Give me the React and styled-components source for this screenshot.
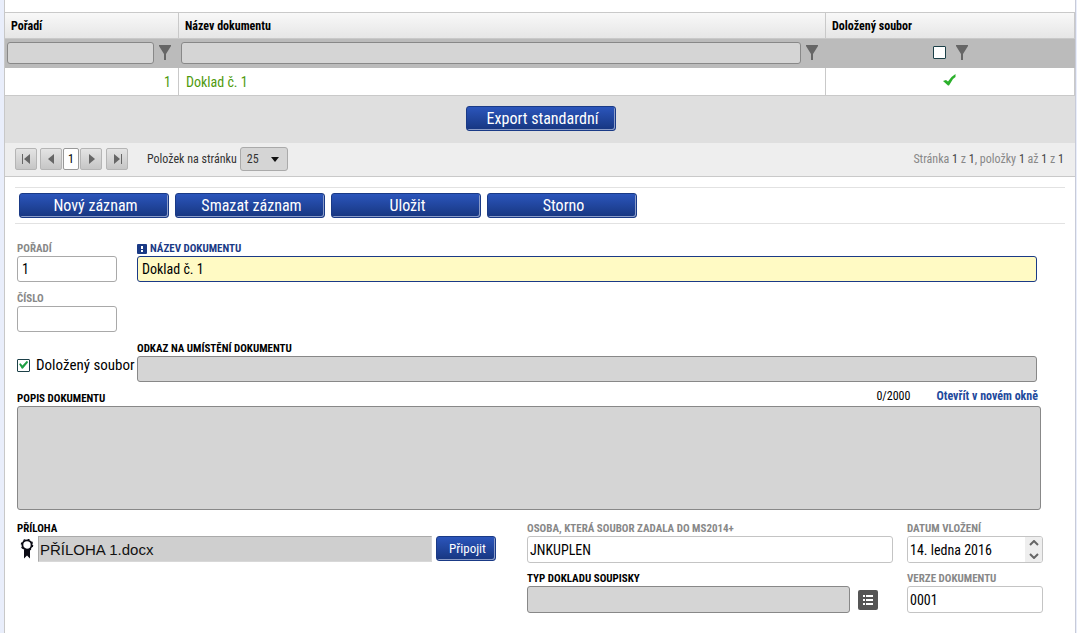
import React, { useState } from 'react';
import styled, { createGlobalStyle } from 'styled-components';

const GlobalStyle = createGlobalStyle`
    * {
        box-sizing: border-box;
    }

    body {
        margin: 0;
        background: #e9eefb;
    }

    body, input, textarea, select, button {
        font-family: 'Roboto Condensed', 'Liberation Sans Narrow', Roboto, sans-serif;
    }
`;

const FunnelIcon = () => (
    <svg width="12" height="15" viewBox="0 0 12 15" aria-hidden="true">
        <path d="M0 0h12v1L7 9v6H5V9L0 1z" fill="#666" />
    </svg>
);

const CheckIcon = () => (
    <svg width="14" height="14" viewBox="0 0 14 14" aria-hidden="true">
        <path d="M0 8 3 7l2 1.500L8.500 4 12.500 1v3L10 6 6 12.500H5z" fill="#2bb02b" />
    </svg>
);

const RibbonIcon = () => (
    <svg width="14" height="20" viewBox="0 0 14 20" aria-hidden="true">
        <path d="M4 11h6v8.500L7 16.500 4 19.500z" fill="#0b0b14" />
        <circle cx="7" cy="6" r="4.600" fill="#fff" stroke="#0b0b14" strokeWidth="1.800" />
        <circle cx="7" cy="6" r="5.600" fill="none" stroke="#0b0b14" strokeWidth="1.300" strokeDasharray="2 2.400" />
    </svg>
);

const ListIcon = () => (
    <svg width="12" height="12" viewBox="0 0 12 12" aria-hidden="true">
        <path d="M1 1h2v2H1zM4 1h7v2H4zM1 5h2v2H1zM4 5h7v2H4zM1 9h2v2H1zM4 9h7v2H4z" fill="#fff" />
    </svg>
);

const RequiredIcon = () => (
    <svg width="10" height="10" viewBox="0 0 10 10" aria-hidden="true">
        <rect width="10" height="10" rx="1" fill="#1a3a86" />
        <path d="M4 2h2v3H4zM4 6h2v2H4z" fill="#fff" />
    </svg>
);

const arrows = {
    first: 'M1 1h1v10H1zM9 1v10L3 6z',
    prev: 'M8 1v10L2 6z',
    next: 'M3 1v10l6-5z',
    last: 'M2 1v10l6-5zM9 1h1v10H9z',
};

const PagerArrow = ({ type, label }) => (
    <PagerButton type="button" aria-label={label}>
        <svg width="11" height="12" viewBox="0 0 11 12" aria-hidden="true">
            <path d={arrows[type]} fill="#666" />
        </svg>
    </PagerButton>
);

const toolbar = ['Nový záznam', 'Smazat záznam', 'Uložit', 'Storno'];

const App = () => {
    const [attached, setAttached] = useState(true);
    const [filter, setFilter] = useState(false);

    return (
        <Panel>
            <GlobalStyle />

            {/* seznam dokumentů */}
            <Table>
                <colgroup>
                    <col width="174" />
                    <col />
                    <col width="249" />
                </colgroup>
                <thead>
                    <tr>
                        <HeadCell scope="col">Pořadí</HeadCell>
                        <HeadCell scope="col">Název dokumentu</HeadCell>
                        <HeadCell scope="col">Doložený soubor</HeadCell>
                    </tr>
                </thead>
                <tbody>
                    <tr>
                        <FilterCell>
                            <FilterBox>
                                <FilterInput aria-label="Filtr pořadí" />
                                <FunnelIcon />
                            </FilterBox>
                        </FilterCell>
                        <FilterCell>
                            <FilterBox>
                                <FilterInput aria-label="Filtr názvu dokumentu" />
                                <FunnelIcon />
                            </FilterBox>
                        </FilterCell>
                        <FilterCell>
                            <FilterBox $center>
                                <Checkbox
                                    aria-label="Filtr doloženého souboru"
                                    checked={filter}
                                    onChange={(e) => setFilter(e.target.checked)}
                                />
                                <FunnelIcon />
                            </FilterBox>
                        </FilterCell>
                    </tr>
                    <tr>
                        <Cell $align="right">1</Cell>
                        <Cell>Doklad č. 1</Cell>
                        <Cell $align="center"><CheckIcon /></Cell>
                    </tr>
                </tbody>
            </Table>

            <ExportBar>
                <Button type="button">Export standardní</Button>
            </ExportBar>

            <Pager>
                <PagerArrow type="first" label="První stránka" />
                <PagerGroup>
                    <PagerArrow type="prev" label="Předchozí stránka" />
                    <CurrentPage type="button">1</CurrentPage>
                    <PagerArrow type="next" label="Další stránka" />
                </PagerGroup>
                <PagerArrow type="last" label="Poslední stránka" />
                <PageSizeLabel htmlFor="pageSize">Položek na stránku</PageSizeLabel>
                <SelectWrapper>
                    <Select id="pageSize" defaultValue="25">
                        <option>10</option>
                        <option>25</option>
                        <option>50</option>
                    </Select>
                </SelectWrapper>
                <PagerInfo>
                    Stránka <b>1</b> z <b>1</b>, položky <b>1</b> až <b>1</b> z <b>1</b>
                </PagerInfo>
            </Pager>

            <Toolbar>
                {toolbar.map((text) => (
                    <Button key={text} type="button">{text}</Button>
                ))}
            </Toolbar>

            {/* detail dokumentu */}
            <Form onSubmit={(e) => e.preventDefault()}>
                <Row>
                    <Field $width="100px">
                        <Label htmlFor="order" $color="#888">Pořadí</Label>
                        <Input id="order" defaultValue="1" />
                    </Field>
                    <Field>
                        <Label htmlFor="name" $color="#1a3a86"><RequiredIcon />Název dokumentu</Label>
                        <Input id="name" defaultValue="Doklad č. 1" $variant="required" />
                    </Field>
                </Row>
                <Row>
                    <Field $width="100px">
                        <Label htmlFor="number" $color="#888">Číslo</Label>
                        <Input id="number" />
                    </Field>
                </Row>
                <Row $tight>
                    <CheckLabel>
                        <Checkbox checked={attached} onChange={(e) => setAttached(e.target.checked)} />
                        Doložený soubor
                    </CheckLabel>
                    <Field>
                        <Label htmlFor="link">Odkaz na umístění dokumentu</Label>
                        <Input id="link" $variant="grey" />
                    </Field>
                </Row>

                <Description>
                    <DescriptionHead>
                        <Label htmlFor="description">Popis dokumentu</Label>
                        <Counter>0/2000</Counter>
                        <Link href="#description">Otevřít v novém okně</Link>
                    </DescriptionHead>
                    <TextArea id="description" />
                </Description>

                <Bottom>
                    <Attachment>
                        <Label htmlFor="file">Příloha</Label>
                        <FileRow>
                            <RibbonIcon />
                            <FileInput id="file" defaultValue="PŘÍLOHA 1.docx" readOnly />
                            <Button type="button" $small>Připojit</Button>
                        </FileRow>
                    </Attachment>
                    <Column $space="14px">
                        <Field>
                            <Label htmlFor="person" $color="#888">Osoba, která soubor zadala do MS2014+</Label>
                            <Input id="person" defaultValue="JNKUPLEN" $variant="light" $tall />
                        </Field>
                        <Field>
                            <Label htmlFor="type">Typ dokladu soupisky</Label>
                            <TypeRow>
                                <Input id="type" $variant="grey" $tall />
                                <ListButton type="button" aria-label="Vybrat ze seznamu"><ListIcon /></ListButton>
                            </TypeRow>
                        </Field>
                    </Column>
                    <Column>
                        <Field>
                            <Label htmlFor="date" $color="#888">Datum vložení</Label>
                            <DateBox>
                                <DateInput id="date" defaultValue="14. ledna 2016" />
                                <Spinner>
                                    <SpinButton type="button" aria-label="Další den">
                                        <svg width="10" height="6" viewBox="0 0 10 6"><path d="M1 5l4-4 4 4" fill="none" stroke="#666" strokeWidth="2" /></svg>
                                    </SpinButton>
                                    <SpinButton type="button" aria-label="Předchozí den">
                                        <svg width="10" height="6" viewBox="0 0 10 6"><path d="M1 1l4 4 4-4" fill="none" stroke="#666" strokeWidth="2" /></svg>
                                    </SpinButton>
                                </Spinner>
                            </DateBox>
                        </Field>
                        <Field>
                            <Label htmlFor="version" $color="#888">Verze dokumentu</Label>
                            <Input id="version" defaultValue="0001" $variant="light" $tall />
                        </Field>
                    </Column>
                </Bottom>
            </Form>
        </Panel>
    );
};

const Panel = styled.main`
    min-height: 100vh;
    margin: 0 1px 0 4px;
    padding-top: 12px;
    border-left: 1px solid #c8c8c8;
    border-right: 1px solid #c8cbd8;
    background: #fff;
    color: #000;
`;

const Table = styled.table`
    width: 100%;
    table-layout: fixed;
    border-collapse: separate;
    border-spacing: 0;
    border-top: 1px solid #c9c9c9;
`;

const HeadCell = styled.th`
    height: 26px;
    padding: 0 6px;
    border-right: 1px solid #c9c9c9;
    border-bottom: 1px solid #c9c9c9;
    background: linear-gradient(#f8f8f8, #e6e6e6);
    font-size: 12px;
    line-height: 16px;
    text-align: left;
`;

const FilterCell = styled.td`
    height: 29px;
    padding: 0 8px 2px 2px;
    background: #bbb;
`;

const FilterBox = styled.div`
    display: flex;
    align-items: center;
    justify-content: ${({ $center }) => ($center ? 'center' : 'flex-start')};
    gap: ${({ $center }) => ($center ? '10px' : '5px')};
    padding-left: ${({ $center }) => ($center ? '6px' : '0')};
`;

const FilterInput = styled.input`
    flex: 1;
    min-width: 0;
    height: 22px;
    padding: 0 4px;
    border: 1px solid #888;
    border-radius: 3px;
    background: #d5d5d5;
    font-size: 14px;
`;

const Checkbox = styled.input.attrs({ type: 'checkbox' })`
    appearance: none;
    flex: none;
    display: grid;
    place-content: center;
    width: 13px;
    height: 13px;
    margin: 0;
    border: 1px solid #1c4048;
    border-radius: 1px;
    background: #fff;

    &:checked::before {
        content: '';
        width: 9px;
        height: 9px;
        background: #21a045;
        clip-path: polygon(0 38%, 18% 30%, 38% 55%, 90% 0, 100% 22%, 42% 92%, 30% 88%);
    }
`;

const Cell = styled.td`
    height: 28px;
    padding: 0 7px;
    border-right: 1px solid #c9c9c9;
    border-bottom: 1px solid #c9c9c9;
    color: #4f9a0c;
    font-size: 14px;
    line-height: 16px;
    text-align: ${({ $align }) => $align || 'left'};
`;

const Button = styled.button`
    flex: none;
    width: ${({ $small }) => ($small ? '60px' : '150px')};
    height: 25px;
    padding: 0 0 0 3px;
    border: 1px solid #1a3a86;
    border-radius: 3px;
    background: linear-gradient(#2b55bb, #173680);
    box-shadow: inset -1px -1px 0 #8b9cc8;
    color: #fff;
    font-size: ${({ $small }) => ($small ? '13px' : '16px')};
    line-height: 20px;
    cursor: pointer;
`;

const ExportBar = styled.div`
    display: flex;
    justify-content: center;
    padding: 10px 0 12px 2px;
    background: #dfdfdf;
`;

const Pager = styled.nav`
    display: flex;
    align-items: center;
    gap: 3px;
    height: 34px;
    padding: 0 11px 1px 10px;
    border-bottom: 1px solid #c9c9c9;
    background: #eee;
`;

const PagerGroup = styled.div`
    display: flex;
    gap: 1px;
    margin-right: 1px;
`;

const PagerButton = styled.button`
    display: grid;
    place-content: center;
    width: 22px;
    height: 22px;
    padding: 0;
    border: 1px solid #b5b5b5;
    border-radius: 2px;
    background: linear-gradient(#e4e4e4, #c6c6c6);
`;

const CurrentPage = styled.button`
    width: 16px;
    height: 22px;
    padding: 0;
    border: 1px solid #999;
    border-radius: 2px;
    background: #fff;
    font-size: 12px;
`;

const PageSizeLabel = styled.label`
    margin-left: 16px;
    color: #333;
    font-size: 12px;
    line-height: 16px;
`;

const SelectWrapper = styled.div`
    position: relative;

    &::after {
        content: '';
        position: absolute;
        top: 10px;
        right: 9px;
        border: 4px solid transparent;
        border-top: 5px solid #111;
        border-bottom: 0;
        pointer-events: none;
    }
`;

const Select = styled.select`
    appearance: none;
    display: block;
    width: 48px;
    height: 24px;
    padding: 0 6px;
    border: 1px solid #aaa;
    border-radius: 3px;
    background: #d5d5d5;
    color: #333;
    font-size: 12px;
`;

const PagerInfo = styled.div`
    margin-left: auto;
    color: #888;
    font-size: 12px;
    line-height: 16px;

    b {
        color: #444;
        font-weight: 400;
    }
`;

const Toolbar = styled.div`
    display: flex;
    gap: 6px;
    margin: 10px 10px 0;
    padding: 5px 4px;
    border-top: 1px solid #e2e2e2;
    border-bottom: 1px solid #e2e2e2;
`;

const Form = styled.form`
    padding: 18px 32px 20px 12px;
`;

const Row = styled.div`
    display: flex;
    align-items: flex-end;
    gap: ${({ $tight }) => ($tight ? '0' : '20px')};
    margin: 0 6px 10px 0;
`;

const Field = styled.div`
    flex: ${({ $width }) => ($width ? `0 0 ${$width}` : '1')};
    min-width: 0;
`;

const Label = styled.label`
    display: flex;
    align-items: center;
    gap: 3px;
    height: 14px;
    color: ${({ $color }) => $color || '#000'};
    font-size: 11px;
    font-weight: 700;
    line-height: 12px;
    text-transform: uppercase;
    white-space: nowrap;
`;

const inputColors = {
    normal: { background: '#fff', border: '#a9a9a9' },
    light: { background: '#fff', border: '#c4c4c4' },
    grey: { background: '#d5d5d5', border: '#888' },
    required: { background: '#fffac4', border: '#1a3a86' },
};

const Input = styled.input`
    display: block;
    width: 100%;
    height: ${({ $tall }) => ($tall ? '27px' : '26px')};
    padding: 0 ${({ $variant }) => ($variant === 'light' ? '2px' : '4px')};
    border: 1px solid ${({ $variant = 'normal' }) => inputColors[$variant].border};
    border-radius: 3px;
    background: ${({ $variant = 'normal' }) => inputColors[$variant].background};
    color: #000;
    font-size: 14px;
`;

const CheckLabel = styled.label`
    display: flex;
    flex: 0 0 120px;
    align-items: center;
    gap: 6px;
    height: 26px;
    margin-bottom: 4px;
    font-size: 15px;
    white-space: nowrap;
`;

const Description = styled.div`
    margin: 0 2px 12px 0;
`;

const DescriptionHead = styled.div`
    display: flex;
    align-items: center;
    height: 14px;
    padding-right: 3px;
`;

const Counter = styled.span`
    margin-left: auto;
    padding-bottom: 6px;
    font-size: 12px;
    line-height: 14px;
`;

const Link = styled.a`
    margin-left: 26px;
    padding-bottom: 6px;
    color: #1f4a9c;
    font-size: 12px;
    font-weight: 700;
    line-height: 14px;
    text-decoration: none;
`;

const TextArea = styled.textarea`
    display: block;
    width: 100%;
    height: 104px;
    padding: 5px;
    border: 1px solid #888;
    border-radius: 3px;
    background: #d5d5d5;
    font-size: 14px;
    resize: none;
`;

const Bottom = styled.div`
    display: grid;
    grid-template-columns: 510fr 380fr 136px;
    align-items: start;
`;

const Attachment = styled.div`
    margin-right: 31px;
`;

const FileRow = styled.div`
    display: flex;
    align-items: flex-start;
    gap: 4px;
    padding-left: 3px;

    > svg {
        margin-top: 3px;
    }
`;

const FileInput = styled.input`
    flex: 1;
    min-width: 0;
    height: 26px;
    padding: 0 1px;
    border: 1px solid #d8d8d8;
    border-top-color: #aaa;
    border-left-color: #aaa;
    background: #cfcfcf;
    color: #111;
    font-family: 'Liberation Sans', Arial, sans-serif;
    font-size: 15px;
`;

const Column = styled.div`
    display: grid;
    gap: 9px;
    margin-right: ${({ $space = '0' }) => $space};
`;

const TypeRow = styled.div`
    display: flex;
    align-items: center;
    gap: 8px;
    padding-right: 15px;
`;

const ListButton = styled.button`
    display: grid;
    flex: none;
    place-content: center;
    width: 20px;
    height: 20px;
    padding: 0;
    border: 0;
    border-radius: 2px;
    background: #555;
`;

const DateBox = styled.div`
    display: flex;
    height: 27px;
    border: 1px solid #c4c4c4;
    border-radius: 3px;
    overflow: hidden;
`;

const DateInput = styled.input`
    flex: 1;
    min-width: 0;
    padding: 0 2px;
    border: 0;
    font-size: 14px;
`;

const Spinner = styled.div`
    display: grid;
    width: 17px;
    background: #eee;
`;

const SpinButton = styled.button`
    display: grid;
    place-content: center;
    padding: 0;
    border: 0;
    background: none;
`;

export default App;
